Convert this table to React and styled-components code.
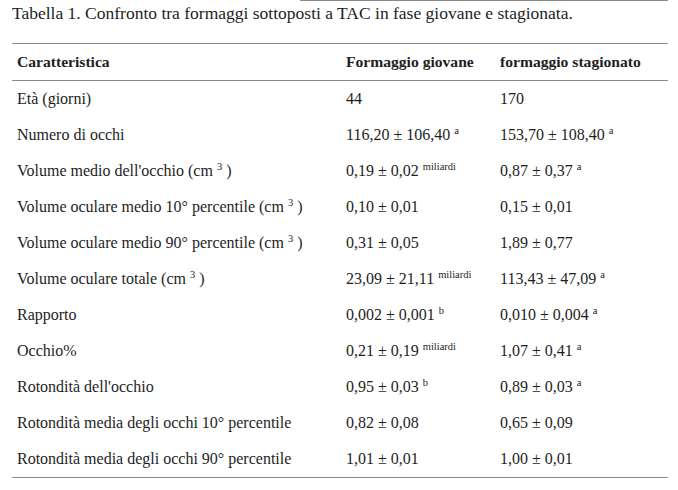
import React from "react";
import styled, { createGlobalStyle } from "styled-components";

const GlobalStyle = createGlobalStyle`
  body {
    margin: 0;
    background: #fff;
    font-family: "Liberation Serif", "DejaVu Serif", serif;
    color: #1e1e1e;
  }
`;

const rows = [
  { name: "Età (giorni)", young: "44", old: "170" },
  { name: "Numero di occhi", young: "116,20 ± 106,40", ys: "a", old: "153,70 ± 108,40", os: "a" },
  { name: "Volume medio dell'occhio (cm", unit: true, young: "0,19 ± 0,02", ys: "miliardi", old: "0,87 ± 0,37", os: "a" },
  { name: "Volume oculare medio 10° percentile (cm", unit: true, young: "0,10 ± 0,01", old: "0,15 ± 0,01" },
  { name: "Volume oculare medio 90° percentile (cm", unit: true, young: "0,31 ± 0,05", old: "1,89 ± 0,77" },
  { name: "Volume oculare totale (cm", unit: true, young: "23,09 ± 21,11", ys: "miliardi", old: "113,43 ± 47,09", os: "a" },
  { name: "Rapporto", young: "0,002 ± 0,001", ys: "b", old: "0,010 ± 0,004", os: "a" },
  { name: "Occhio%", young: "0,21 ± 0,19", ys: "miliardi", old: "1,07 ± 0,41", os: "a" },
  { name: "Rotondità dell'occhio", young: "0,95 ± 0,03", ys: "b", old: "0,89 ± 0,03", os: "a" },
  { name: "Rotondità media degli occhi 10° percentile", young: "0,82 ± 0,08", old: "0,65 ± 0,09" },
  { name: "Rotondità media degli occhi 90° percentile", young: "1,01 ± 0,01", old: "1,00 ± 0,01" },
];

const Page = styled.div`
  width: 678px;
  height: 490px;
  padding-left: 12px;
  box-sizing: border-box;
`;

const TopRule = styled.div`
  margin-left: 288px;
  width: 368px;
  height: 1px;
  background: #8a8a8a;
`;

const Caption = styled.div`
  font-size: 17.5px;
  line-height: 22px;
  margin-top: 1px;
  height: 41px;
  white-space: nowrap;
`;

const Table = styled.table`
  width: 656px;
  table-layout: fixed;
  border-collapse: collapse;
  border-top: 1px solid #8a8a8a;
  border-bottom: 1px solid #8a8a8a;
`;

const HeadCell = styled.th`
  text-align: left;
  font-weight: bold;
  font-size: 15.6px;
  height: 36px;
  padding: 0 0 0 5px;
  border-bottom: 1px solid #8a8a8a;
  width: ${(p) => p.$w || "auto"};
  white-space: nowrap;
`;

const Cell = styled.td`
  font-size: 16px;
  height: 36px;
  padding: 0 0 0 5px;
  white-space: nowrap;
`;

const Sup = styled.sup`
  font-size: 10.5px;
  vertical-align: 6px;
  line-height: 0;
`;

function Value({ text, mark }) {
  return (
    <>
      {text}
      {mark && <> <Sup>{mark}</Sup></>}
    </>
  );
}

export default function App() {
  return (
    <Page>
      <GlobalStyle />
      <TopRule />
      <Caption>
        Tabella 1. Confronto tra formaggi sottoposti a TAC in fase giovane e stagionata.
      </Caption>
      <Table>
        <thead>
          <tr>
            <HeadCell $w="324px">Caratteristica</HeadCell>
            <HeadCell $w="149px">Formaggio giovane</HeadCell>
            <HeadCell>formaggio stagionato</HeadCell>
          </tr>
        </thead>
        <tbody>
          {rows.map((r) => (
            <tr key={r.name}>
              <Cell>
                {r.name}
                {r.unit && <> <Sup>3</Sup> )</>}
              </Cell>
              <Cell>
                <Value text={r.young} mark={r.ys} />
              </Cell>
              <Cell>
                <Value text={r.old} mark={r.os} />
              </Cell>
            </tr>
          ))}
        </tbody>
      </Table>
    </Page>
  );
}
